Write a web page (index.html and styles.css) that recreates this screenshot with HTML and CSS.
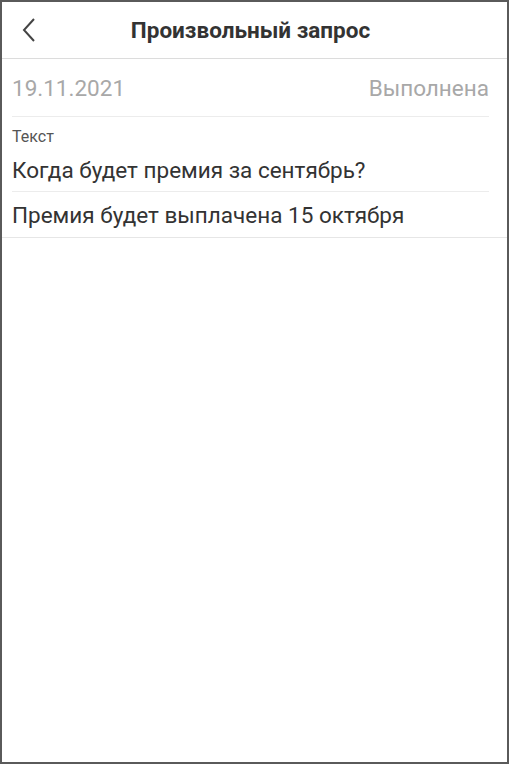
FILE: index.html
```html
<!DOCTYPE html>
<html lang="ru">
<head>
  <meta charset="UTF-8">
  <meta name="viewport" content="width=device-width, initial-scale=1.0">
  <title>Произвольный запрос</title>
  <link rel="stylesheet" href="styles.css">
</head>
<body>
  <div class="screen">
    <header class="topbar">
      <button class="back" aria-label="Назад">
        <svg width="14" height="24" viewBox="0 0 14 24">
          <path d="M12 1 L2 12 L12 23" fill="none" stroke="#444" stroke-width="2"/>
        </svg>
      </button>
      <h1>Произвольный запрос</h1>
    </header>
    <div class="details">
      <div class="meta-row">
        <span>19.11.2021</span>
        <span>Выполнена</span>
      </div>
      <div class="field">
        <div class="label">Текст</div>
        <div class="value">Когда будет премия за сентябрь?</div>
      </div>
      <div class="answer">Премия будет выплачена 15 октября</div>
    </div>
  </div>
</body>
</html>
```

FILE: styles.css
```css
* { box-sizing: border-box; }
html, body { margin: 0; padding: 0; }
body { font-family: Roboto, "Noto Sans", Arial, sans-serif; background: #fff; }
.screen { width: 509px; height: 764px; border: 2px solid #5a5a5a; background: #fff; }
.topbar { position: relative; height: 57px; padding-right: 8px; border-bottom: 1px solid #dcdcdc; display: flex; align-items: center; justify-content: center; }
.topbar h1 { margin: 0; font-size: 22.5px; font-weight: bold; color: #333; }
.back { position: absolute; left: 17px; top: 15px; background: none; border: none; padding: 0; width: 20px; height: 26px; display: flex; align-items: center; justify-content: center; }
.details { border-bottom: 1px solid #e6e6e6; }
.meta-row { margin: 0 18px 0 10px; height: 58px; display: flex; justify-content: space-between; align-items: center; font-size: 22.5px; color: #a8a8a8; border-bottom: 1px solid #ececec; }
.field { margin: 0 18px 0 10px; border-bottom: 1px solid #ececec; padding: 11px 0 7px; }
.label { font-size: 16px; color: #555; line-height: 18px; }
.value { font-size: 22.5px; color: #333; line-height: 28px; margin-top: 10px; }
.answer { padding: 9px 10px 8px; font-size: 22.5px; color: #333; line-height: 28px; }
```
